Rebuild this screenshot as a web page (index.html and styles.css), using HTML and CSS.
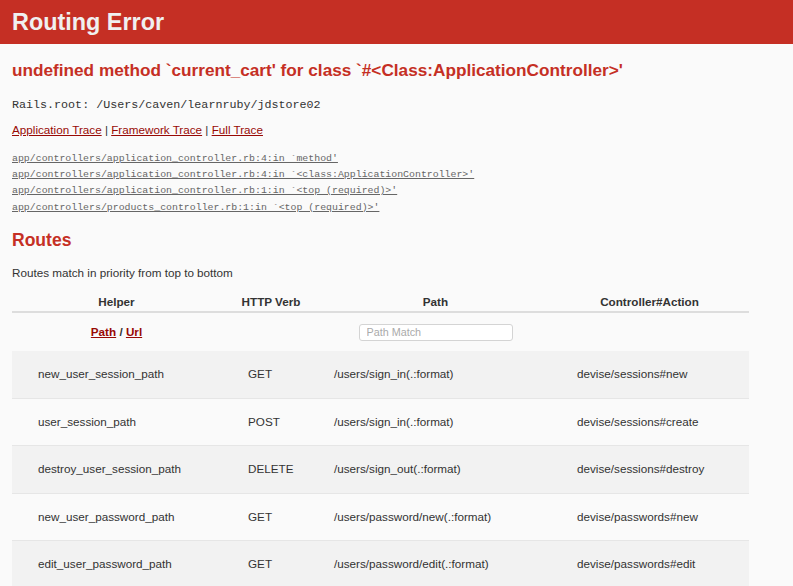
FILE: index.html
```html
<!DOCTYPE html>
<html>
<head>
<meta charset="utf-8">
<title>Routing Error</title>
<link rel="stylesheet" href="styles.css">
</head>
<body>
<header class="top">
  <h1 class="top-title">Routing Error</h1>
</header>
<div class="container">
  <h2 class="err-title">undefined method `current_cart' for class `#&lt;Class:ApplicationController&gt;'</h2>
  <p class="root"><code>Rails.root: /Users/caven/learnruby/jdstore02</code></p>
  <p class="trace-links"><a href="#">Application Trace</a> | <a href="#">Framework Trace</a> | <a href="#">Full Trace</a></p>
  <pre class="traces"><a href="#" class="frame">app/controllers/application_controller.rb:4:in `method'</a>
<a href="#" class="frame">app/controllers/application_controller.rb:4:in `&lt;class:ApplicationController&gt;'</a>
<a href="#" class="frame">app/controllers/application_controller.rb:1:in `&lt;top (required)&gt;'</a>
<a href="#" class="frame">app/controllers/products_controller.rb:1:in `&lt;top (required)&gt;'</a></pre>
  <h2 class="routes-title">Routes</h2>
  <p class="routes-note">Routes match in priority from top to bottom</p>
  <table class="route-table">
    <colgroup>
      <col class="c-helper"><col class="c-verb"><col class="c-path"><col class="c-action">
    </colgroup>
    <thead>
      <tr class="head-row">
        <th>Helper</th><th>HTTP Verb</th><th>Path</th><th>Controller#Action</th>
      </tr>
      <tr class="filter-row">
        <th><a href="#">Path</a> / <a href="#">Url</a></th>
        <th></th>
        <th><input class="path-search" type="text" placeholder="Path Match"></th>
        <th></th>
      </tr>
    </thead>
    <tbody>
      <tr><td class="t-helper">new_user_session_path</td><td class="t-verb">GET</td><td class="t-path">/users/sign_in(.:format)</td><td class="t-action">devise/sessions#new</td></tr>
      <tr><td class="t-helper">user_session_path</td><td class="t-verb">POST</td><td class="t-path">/users/sign_in(.:format)</td><td class="t-action">devise/sessions#create</td></tr>
      <tr><td class="t-helper">destroy_user_session_path</td><td class="t-verb">DELETE</td><td class="t-path">/users/sign_out(.:format)</td><td class="t-action">devise/sessions#destroy</td></tr>
      <tr><td class="t-helper">new_user_password_path</td><td class="t-verb">GET</td><td class="t-path">/users/password/new(.:format)</td><td class="t-action">devise/passwords#new</td></tr>
      <tr><td class="t-helper">edit_user_password_path</td><td class="t-verb">GET</td><td class="t-path">/users/password/edit(.:format)</td><td class="t-action">devise/passwords#edit</td></tr>
    </tbody>
  </table>
</div>
</body>
</html>
```
FILE: styles.css
```css
html, body {
  margin: 0;
  padding: 0;
}
body {
  background: #FAFAFA;
  color: #333;
  font-family: "Liberation Sans", Arial, Helvetica, sans-serif;
  font-size: 11.7px;
  line-height: 16.2px;
}
a { color: #980905; }

.top {
  background: #C52F24;
  color: #F0F0F0;
  height: 44px;
  padding: 0 12px;
  display: flex;
  align-items: center;
}
.top-title {
  margin: 0;
  font-size: 23.4px;
  line-height: 26px;
  font-weight: bold;
}

.container {
  padding: 0 12px;
}
.err-title, .routes-title {
  color: #C52F24;
  font-size: 17.55px;
  line-height: 22.5px;
  font-weight: bold;
  margin: 0;
}
.err-title {
  margin-top: 15px;
  font-size: 17.2px;
}
.root {
  margin: 14px 0 0;
}
.root code {
  font-family: "Liberation Mono", "Courier New", monospace;
  font-size: 11.7px;
}
.trace-links {
  margin: 9px 0 0;
}
.traces {
  margin: 13px 0 0;
  font-family: "Liberation Mono", "Courier New", monospace;
  font-size: 9.9px;
  line-height: 16.2px;
}
.traces .frame { color: #666; }
.routes-title { margin-top: 13px; }
.routes-note { margin: 13.75px 0 0; }

.route-table {
  margin-top: 11px;
  border-collapse: collapse;
  table-layout: fixed;
  width: 737px;
}
.c-helper { width: 209px; }
.c-verb { width: 100px; }
.c-path { width: 229px; }
.c-action { width: 199px; }

.route-table th {
  font-weight: bold;
  text-align: center;
  padding: 0;
}
.head-row { border-bottom: 2px solid #ddd; }
.head-row th { height: 19px; }
.filter-row th { height: 38px; }
.path-search {
  box-sizing: border-box;
  width: 154px;
  height: 17px;
  border: 1px solid #d4d4d4;
  border-radius: 3px;
  background: #fff;
  font-family: "Liberation Sans", Arial, sans-serif;
  font-size: 10.8px;
  padding: 0 7px;
  color: #333;
  display: block;
  margin: 0 auto;
}
.path-search::placeholder { color: #aaa; }

.route-table tbody tr { border-bottom: 1px solid #e6e6e6; }
.route-table tbody tr:nth-child(odd) { background: #f2f2f2; }
.route-table td {
  height: 46.5px;
  padding: 0 0 0 27px;
  white-space: nowrap;
  overflow: hidden;
}
.route-table td.t-helper { padding-left: 26px; }
.route-table td.t-path { padding-left: 13px; }
```
